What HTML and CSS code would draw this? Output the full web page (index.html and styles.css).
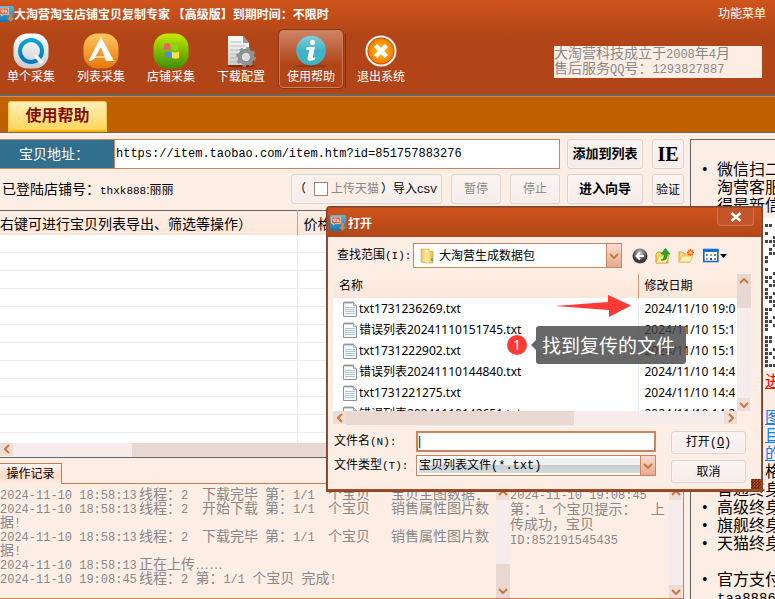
FILE: index.html
```html
<!DOCTYPE html>
<html lang="zh-CN">
<head>
<meta charset="utf-8">
<title>大淘营淘宝店铺宝贝复制专家</title>
<link rel="stylesheet" href="styles.css">
</head>
<body>
<svg class="defs" aria-hidden="true">
  <defs>
    <linearGradient id="silver" x2="0" y2="1"><stop stop-color="#fff"/><stop offset="1" stop-color="#c9cacc"/></linearGradient>
    <linearGradient id="blue" x2="0" y2="1"><stop stop-color="#00a5d8"/><stop offset="1" stop-color="#0a78ba"/></linearGradient>
    <linearGradient id="orange" x2="0" y2="1"><stop stop-color="#ffc65e"/><stop offset="1" stop-color="#e6770c"/></linearGradient>
    <linearGradient id="green" x2="0" y2="1"><stop stop-color="#c4ea00"/><stop offset="1" stop-color="#3e8e04"/></linearGradient>
    <linearGradient id="teal" x2="0" y2="1"><stop stop-color="#7fd0dc"/><stop offset=".5" stop-color="#41b3c6"/><stop offset="1" stop-color="#3fb4c6"/></linearGradient>
    <radialGradient id="flame"><stop stop-color="#ffd000"/><stop offset="1" stop-color="#f47a00"/></radialGradient>
    <linearGradient id="gold" x2="1" y2="0"><stop stop-color="#e8c860"/><stop offset=".5" stop-color="#fff0a8"/><stop offset="1" stop-color="#dcb848"/></linearGradient>
    <linearGradient id="app" x2="0" y2="1"><stop stop-color="#5fb4de"/><stop offset="1" stop-color="#1674ac"/></linearGradient>
    <radialGradient id="ball" cy=".3"><stop stop-color="#ccc"/><stop offset="1" stop-color="#3d3d3d"/></radialGradient>
    <symbol id="up" viewBox="0 0 10 6"><path d="M1 5l4-4 4 4" fill="none" stroke="#c87941" stroke-width="2"/></symbol>
    <symbol id="down" viewBox="0 0 10 6"><path d="M1 1l4 4 4-4" fill="none" stroke="#c87941" stroke-width="2"/></symbol>
    <symbol id="left" viewBox="0 0 6 10"><path d="M5 1L1 5l4 4" fill="none" stroke="#c87941" stroke-width="2"/></symbol>
    <symbol id="right" viewBox="0 0 6 10"><path d="M1 1l4 4-4 4" fill="none" stroke="#c87941" stroke-width="2"/></symbol>
    <symbol id="logo" viewBox="0 0 16 16"><rect width="16" height="16" rx="2" fill="url(#app)"/><path d="M1.500 2h9v6.500H5.500L3.500 10V8.500h-2z" fill="#e8643c" stroke="#f8d8c8" stroke-width=".7"/><path d="M3 4l1.500 3M5 3.500v3.500M7 4l.5 3M8 4l1 3" stroke="#fff" stroke-width=".9"/><path d="M11 8h3v4h2l-3.500 4L9 12h2z" fill="#f47c10"/></symbol>
    <symbol id="txt" viewBox="0 0 14 16"><path d="M.5 1.500h10l3 3v11H.5z" fill="#f7fbfd" stroke="#8b9296"/><path d="M2 6.500h10M2 8.500h10M2 10.500h10M2 12.500h10" stroke="#a9c7d8"/><path d="M2 0v3M4 0v3M6 0v3M8 0v3M10 0v3" stroke="#999" stroke-width=".8"/><path d="M10.500 1.500v3h3" fill="#ddd" stroke="#8b9296" stroke-width=".7"/></symbol>
  </defs>
</svg>

<div class="app">
  <header class="top">
    <div class="titlebar">
      <svg class="logo16"><use href="#logo"/></svg>
      <h1>大淘营淘宝店铺宝贝复制专家 【高级版】到期时间：不限时</h1>
      <a class="menu" href="#">功能菜单</a>
    </div>
    <div class="toolrow">
      <nav class="tools">
        <button class="tool">
          <svg viewBox="0 0 36 36"><rect x=".5" y=".5" width="35" height="35" rx="14" fill="url(#silver)"/><circle cx="18" cy="18" r="11" fill="none" stroke="url(#blue)" stroke-width="4"/><path d="M22 22l7 8" stroke="#f4f4f4" stroke-width="3.500"/></svg>
          单个采集</button>
        <button class="tool">
          <svg viewBox="0 0 36 36"><rect x=".5" y=".5" width="35" height="35" rx="14" fill="url(#orange)"/><path fill-rule="evenodd" d="M18 4l13 24h-8l-1.500-3.500H13L8 28H5.500zM18 14l-5.500 9.500h9z" fill="#fff"/></svg>
          列表采集</button>
        <button class="tool">
          <svg viewBox="0 0 36 36"><rect x=".5" y=".5" width="35" height="35" rx="14" fill="url(#green)"/><path d="M11 11q3-1.500 6 0v6q-3-1-6 0z" fill="#f0606a"/><path d="M19 11.500q3 1 6-1v6q-3 1.500-6 .5z" fill="#8fd420"/><path d="M12 19q3-1.200 6 0v6q-3-1-6 0z" fill="#4a8fd0"/><path d="M19 19q3.500 1 7-.5v6.500q-3.500 1-7 0z" fill="#ffe04a"/></svg>
          店铺采集</button>
        <button class="tool">
          <svg viewBox="0 0 36 36"><ellipse cx="18" cy="33" rx="14" ry="1.500" fill="#7c2c08"/><path d="M5 3h15l6 7v22H5z" fill="url(#silver)"/><path d="M20 3v7h6z" fill="#999"/><path d="M7 9h11M7 13h15M7 17h15M7 21h9M7 25h8M7 29h8" stroke="#bbb"/><circle cx="23" cy="24" r="6" fill="none" stroke="#8f9295" stroke-width="4.500"/><circle cx="23" cy="24" r="8.500" fill="none" stroke="#8f9295" stroke-width="3" stroke-dasharray="3.340"/><circle cx="23" cy="24" r="3.500" fill="#d8d8d8" stroke="#eee"/></svg>
          下载配置</button>
        <button class="tool active">
          <svg viewBox="0 0 36 36"><ellipse cx="18" cy="33" rx="16" ry="1.500" fill="#8b3a1c"/><circle cx="18" cy="17.500" r="14.800" fill="url(#teal)"/><circle cx="19.500" cy="9.500" r="2.600" fill="#fff"/><path d="M13.500 14h8.500L19.800 24q-.2 1.300 2.500.5l-.5 2.200q-8 2.800-7.300-1.700l1.600-7q.2-1.700-3-1.200z" fill="#fff"/></svg>
          使用帮助</button>
        <button class="tool exit">
          <svg viewBox="0 0 36 36"><circle cx="18" cy="18" r="14.500" fill="#c85000" stroke="#f4f4f4" stroke-width="2"/><circle cx="18" cy="18" r="12.500" fill="url(#flame)"/><path d="M12.500 12.500l11 11M23.500 12.500l-11 11" stroke="#fff" stroke-width="4.500"/></svg>
          退出系统</button>
      </nav>
      <p class="company">大淘营科技成立于<span class="mono">2008</span>年<span class="mono">4</span>月<br>售后服务<span class="mono">QQ</span>号：<span class="mono">1293827887</span></p>
    </div>
  </header>
  <div class="tabs"><button class="tab">使用帮助</button></div>

  <div class="body">
    <main class="work">
      <div class="row">
        <label class="addr-label" for="addr">宝贝地址：</label>
        <input class="addr mono" id="addr" value="https://item.taobao.com/item.htm?id=851757883276">
        <button class="btn strong wide">添加到列表</button>
        <button class="btn ie">IE</button>
      </div>
      <div class="row second">
        <span class="shop">已登陆店铺号：<small><span class="mono">thxk888</span>:丽丽</small></span>
        <div class="btn csv"><span>（</span><label class="tmall"><input type="checkbox">上传天猫</label><button>）导入<span class="mono">CSV</span></button></div>
        <button class="btn pause" disabled>暂停</button>
        <button class="btn pause" disabled>停止</button>
        <button class="btn strong wide">进入向导</button>
        <button class="btn ie check">验证</button>
      </div>
      <table class="items">
        <thead><tr><th>右键可进行宝贝列表导出、筛选等操作）</th><th>价格</th></tr></thead>
        <tbody>
          <tr><td></td><td></td></tr><tr><td></td><td></td></tr><tr><td></td><td></td></tr><tr><td></td><td></td></tr>
          <tr><td></td><td></td></tr><tr><td></td><td></td></tr><tr><td></td><td></td></tr><tr><td></td><td></td></tr>
          <tr><td></td><td></td></tr><tr><td></td><td></td></tr><tr><td></td><td></td></tr><tr><td></td><td></td></tr>
        </tbody>
      </table>
      <div class="hbar main-bar"><span class="cap"><svg class="h"><use href="#left"/></svg></span><span class="track"></span><span class="thumb"></span></div>
      <div class="logtabs"><button>操作记录</button></div>
      <div class="logs">
        <div class="log">
          <p><span class="mono time">2024-11-10 18:58:13</span><span class="cell">线程：<span class="mono">2</span></span><span class="cell">下载完毕</span><span class="cell">第：<span class="mono">1/1</span></span><span class="cell">个宝贝</span><span>宝贝主图数据：</span></p>
          <p><span class="mono time">2024-11-10 18:58:13</span><span class="cell">线程：<span class="mono">2</span></span><span class="cell">开始下载</span><span class="cell">第：<span class="mono">1/1</span></span><span class="cell">个宝贝</span><span>销售属性图片数</span></p>
          <p>据<span class="mono">!</span></p>
          <p><span class="mono time">2024-11-10 18:58:13</span><span class="cell">线程：<span class="mono">2</span></span><span class="cell">下载完毕</span><span class="cell">第：<span class="mono">1/1</span></span><span class="cell">个宝贝</span><span>销售属性图片数</span></p>
          <p>据<span class="mono">!</span></p>
          <p><span class="mono time">2024-11-10 18:58:13</span><span>正在上传……</span></p>
          <p><span class="mono time">2024-11-10 19:08:45</span><span>线程：<span class="mono">2 </span>第：<span class="mono">1/1 </span>个宝贝<span class="mono"> </span>完成<span class="mono">!</span></span></p>
        </div>
        <div class="vbar"><span class="cap"><svg class="v"><use href="#up"/></svg></span><span class="track"></span><span class="thumb"><svg class="v"><use href="#down"/></svg></span></div>
        <div class="log tips">
          <p><span class="mono">2024-11-10 19:08:45</span></p>
          <p>第：<span class="mono">1 </span>个宝贝提示：<span class="mono">  </span>上</p>
          <p>传成功，宝贝</p>
          <p><span class="mono">ID:852191545435</span></p>
        </div>
        <div class="vbar"><span class="cap"><svg class="v"><use href="#up"/></svg></span><span class="track"></span><span class="cap"><svg class="v"><use href="#down"/></svg></span></div>
      </div>
    </main>
    <aside class="side">
      <ul>
        <li>微信扫二<br>淘营客服<br>得最新信</li>
      </ul>
      <div class="qr"><svg viewBox="0 0 12 152"><path fill="#444" d="M0 6h3v3H0zM4 6h3v3H4zM0 14h3v3H0zM8 18h3v3H8zM0 22h3v3H0zM4 22h3v3H4zM8 22h3v3H8zM8 26h3v3H8zM4 30h3v3H4zM4 34h3v3H4zM8 34h3v3H8zM0 38h3v3H0zM0 42h3v3H0zM0 50h3v3H0zM8 54h3v3H8zM0 58h3v3H0zM4 58h3v3H4zM0 62h3v3H0zM8 62h3v3H8zM4 66h3v3H4zM8 66h3v3H8zM0 70h3v3H0zM0 74h3v3H0zM8 74h3v3H8zM0 78h3v3H0zM4 78h3v3H4zM4 82h3v3H4zM8 82h3v3H8zM8 86h3v3H8zM0 90h3v3H0zM4 90h3v3H4zM0 94h3v3H0zM0 98h3v3H0zM8 98h3v3H8zM0 102h3v3H0zM4 102h3v3H4zM0 106h3v3H0zM8 106h3v3H8zM0 110h3v3H0zM0 118h3v3H0zM4 118h3v3H4zM0 122h3v3H0zM4 122h3v3H4zM0 126h3v3H0zM0 130h3v3H0zM8 130h3v3H8zM0 134h3v3H0zM4 134h3v3H4zM0 138h3v3H0zM8 138h3v3H8zM0 142h3v3H0zM0 146h3v3H0zM4 146h3v3H4zM8 146h3v3H8z"/></svg></div>
      <p class="tail"><a class="red" href="#">进</a></p>
      <p class="tail gap-above"><a href="#">图<br>目<br>的</a><br>格</p>
      <ul>
        <li>普通终身</li><li>高级终身</li><li>旗舰终身</li><li>天猫终身</li>
      </ul>
      <ul class="gap-above"><li>官方支付<br><span class="pay">taa8886</span></li></ul>
    </aside>
  </div>

  <section class="dialog" role="dialog" aria-label="打开">
    <div class="dlg-title"><svg class="logo16"><use href="#logo"/></svg><h2>打开</h2><button class="close" aria-label="关闭"><svg viewBox="0 0 12 10"><path d="M1.500 1l9 8M10.500 1l-9 8" stroke="#fff" stroke-width="2.500"/></svg></button></div>
    <div class="lookup">
      <label for="dir">查找范围<span class="mono">(I):</span></label>
      <div class="combo">
        <select id="dir"><option>大淘营生成数据包</option></select>
        <svg class="folder" viewBox="0 0 14 16"><path d="M1 1h8v2h4v12H6l-5-1z" fill="url(#gold)" stroke="#c9a53a" stroke-width=".6"/><path d="M6 15V4l3-2v12z" fill="#f7e490"/><path d="M12 10v3" stroke="#4a9ad0" stroke-width="1.500"/></svg>
        <span class="drop"><svg class="v"><use href="#down"/></svg></span>
      </div>
      <div class="icons">
        <button aria-label="后退"><svg viewBox="0 0 16 16"><circle cx="8" cy="8" r="7.500" fill="url(#ball)"/><path d="M12 8H5M8 4.500L4.500 8 8 11.500" fill="none" stroke="#fff" stroke-width="2"/></svg></button>
        <button aria-label="向上一级"><svg viewBox="0 0 16 16"><path d="M1 15V6l2-2h3l1 2h6v9z" fill="#f2dc6e" stroke="#c8a030"/><path d="M1 15l3-7h10l-3 7z" fill="#fff0a0" stroke="#d4b040" stroke-width=".7"/><path d="M6 12q4-1 3-6H6l4.500-5.500L15 6h-3q1 7-6 6z" fill="#2ea82a" stroke="#187818" stroke-width=".6"/></svg></button>
        <button aria-label="新建文件夹"><svg viewBox="0 0 16 16"><path d="M1 14V4h4l1 2h6v8z" fill="#f5d878" stroke="#d8a838"/><path d="M1 14l3-6h11l-3 6z" fill="#fff0b0" stroke="#dcb050" stroke-width=".7"/><path d="M12.500 1v7M9 4.500h7M10 2l5 5M15 2l-5 5" stroke="#f06020" stroke-width="1.300"/><circle cx="12.500" cy="4.500" r="1.500" fill="#ffd040"/></svg></button>
        <button class="view" aria-label="视图"><svg viewBox="0 0 24 16"><path d="M.8 1.500h14v12H.8z" fill="#fff" stroke="#0f62c4" stroke-width="1.600"/><path d="M0 1h15.500v3H0z" fill="#1670d8"/><path d="M3 6h2v2H3zM11 10h2v2h-2z" fill="#88a"/><path d="M7 6h2v2H7zM3 10h2v2H3z" fill="#e09050"/><path d="M11 6h2v2h-2z" fill="#30a030"/><path d="M7 10h2v2H7z" fill="#2040d0"/><path d="M17 6h7l-3.500 4z" fill="#000"/></svg></button>
      </div>
    </div>
    <div class="files">
      <div class="view-port">
        <table>
          <thead><tr><th>名称</th><th>修改日期</th></tr></thead>
          <tbody>
            <tr><td><svg><use href="#txt"/></svg>txt1731236269.txt</td><td>2024/11/10 19:0</td></tr>
            <tr><td><svg><use href="#txt"/></svg>错误列表20241110151745.txt</td><td>2024/11/10 15:1</td></tr>
            <tr><td><svg><use href="#txt"/></svg>txt1731222902.txt</td><td>2024/11/10 15:1</td></tr>
            <tr><td><svg><use href="#txt"/></svg>错误列表20241110144840.txt</td><td>2024/11/10 14:4</td></tr>
            <tr><td><svg><use href="#txt"/></svg>txt1731221275.txt</td><td>2024/11/10 14:4</td></tr>
            <tr><td><svg><use href="#txt"/></svg>错误列表20241110142651.txt</td><td>2024/11/10 14:2</td></tr>
          </tbody>
        </table>
      </div>
      <div class="vbar file-bar"><span class="thumb"><svg class="v"><use href="#up"/></svg></span><span class="track"></span><span class="cap"><svg class="v"><use href="#down"/></svg></span></div>
      <div class="hbar"><span class="cap"><svg class="h"><use href="#left"/></svg></span><span class="thumb"></span><span class="track"></span><span class="cap"><svg class="h"><use href="#right"/></svg></span></div>
    </div>
    <div class="form">
      <div class="fields">
        <label for="fname">文件名<span class="mono">(N):</span></label>
        <input id="fname" type="text" value="|">
        <label for="ftype">文件类型<span class="mono">(T):</span></label>
        <div class="combo type">
          <select id="ftype"><option>宝贝列表文件(*.txt)</option></select>
          <span class="drop"><svg class="v"><use href="#down"/></svg></span>
        </div>
      </div>
      <div class="actions"><button class="btn">打开<span class="mono">(<u>O</u>)</span></button><button class="btn">取消</button></div>
    </div>
    <span class="grip"></span>
  </section>

  <svg class="arrow" viewBox="0 0 76 22"><path d="M0 11L53 7V0l23 10.500L54 22v-7z" fill="#fd3a35"/></svg>
  <span class="badge">1</span>
  <div class="tooltip">找到复传的文件</div>
</div>
</body>
</html>
```
FILE: styles.css
```css
* { box-sizing: border-box; }

body {
  margin: 0;
  font: 12px/14px "Liberation Sans", "Noto Sans CJK SC", sans-serif;
  color: #000;
}

h1, h2, p, ul { margin: 0; padding: 0; }
button, input, select { font: inherit; color: inherit; }
button { padding: 0; border: 0; background: none; white-space: nowrap; }
svg { display: block; flex: none; }
.defs { position: absolute; width: 0; height: 0; }
.mono { font-family: "Liberation Mono", "Noto Sans CJK SC", monospace; }
.logo16 { width: 16px; height: 16px; }

.app {
  position: relative;
  display: flex;
  flex-direction: column;
  height: 100vh;
  overflow: hidden;
  background: #fdeee5;
}

/* header */
.top {
  flex: none;
  background: linear-gradient(#d0541c, #b14517 36px);
  color: #fff;
  border-bottom: 2px solid #666;
}
.titlebar { display: flex; align-items: center; height: 28px; padding-right: 9px; }
.titlebar .logo16 { margin-left: -2px; }
.titlebar h1 { font: bold 12px/16px "Noto Sans CJK SC", sans-serif; margin-right: auto; white-space: nowrap; }
.menu { color: #fff; text-decoration: none; }
.toolrow { display: flex; padding: 2px 13px 6px 0; }
.tools { display: flex; gap: 6px; margin-left: -1px; margin-right: auto; }
.tool {
  display: flex;
  flex-direction: column;
  align-items: center;
  gap: 1px;
  width: 64px;
  height: 58px;
  padding-top: 2px;
  border: 1px solid transparent;
  border-radius: 4px;
}
.tool svg { width: 36px; height: 36px; }
.tool.active {
  border-color: #c9805e;
  outline: 1px solid #8e3410;
  background: linear-gradient(#cd8265, #b14517 60%);
}
.exit { position: relative; }
.exit::before { content: ""; position: absolute; left: -5px; top: 3px; width: 1px; height: 54px; background: #80300e; }
.company {
  width: 208px;
  height: 32px;
  margin-top: 16px;
  background: #fdeee5;
  color: #888;
  font-size: 14px;
  line-height: 14px;
  white-space: nowrap;
}
.company .mono, .log .mono { font-size: 12px; line-height: 12px; }

.tabs {
  flex: none;
  height: 37px;
  padding: 4px 8px 0;
  background: #c06000;
  border-top: 1px solid #d98a50;
  border-bottom: 1px solid #666;
}
.tab {
  width: 99px;
  height: 31px;
  border: 1px solid #f4c650;
  border-bottom: 2px solid #ffb400;
  border-radius: 3px 3px 0 0;
  background: linear-gradient(#ffeeb8, #ffd65c);
  color: #801010;
  font: bold 16px/20px "Liberation Serif", "Noto Sans CJK SC", serif;
}

/* working area */
.body { display: flex; flex: 1; min-height: 0; }
.work { display: flex; flex-direction: column; flex: 1; min-width: 0; }
.row { display: flex; flex: none; align-items: stretch; height: 30px; margin: 6px 1px 5px 0; }
.row.second { margin: 0 1px 6px 0; }
.addr-label {
  width: 114px;
  padding-left: 19px;
  background: #306f8d;
  border: 1px solid #c98560;
  border-width: 1px 0;
  color: #fff;
  font-size: 14px;
  line-height: 28px;
}
.addr { flex: 1; min-width: 0; padding: 0 1px; border: 1px solid #c98560; background: #fff; }
.btn {
  border: 1px solid #ddd2cd;
  border-radius: 3px;
  background: linear-gradient(#fcf5f2, #f3eceb);
  box-shadow: inset 0 0 0 1px #fbf3ef;
}
.wide { width: 76px; margin-left: 7px; }
.strong { font-weight: bold; font-size: 13px; }
.ie { width: 32px; margin-left: 9px; font: bold 20px/24px "Liberation Serif", serif; }
.ie.check { font: 12px/14px "Noto Sans CJK SC", sans-serif; }
.shop { margin-right: auto; padding-left: 2px; font-size: 14px; line-height: 30px; }
.shop small { font-size: 12px; }
.shop .mono { font-size: 11px; }
.csv { display: flex; align-items: center; width: 151px; overflow: hidden; }
.csv > span { width: 18px; margin-left: 2px; }
.csv .mono { font-size: 11px; }
.tmall { display: flex; align-items: center; gap: 3px; width: 69px; height: 24px; padding-left: 2px; background: #fdeee5; color: #888; white-space: nowrap; }
.tmall input { appearance: none; flex: none; width: 14px; height: 14px; margin: 0; border: 1px solid #888; background: #fff; }
.pause { width: 50px; margin-left: 9px; color: #888; }

.items { flex: none; width: 100%; border-collapse: collapse; table-layout: fixed; border-top: 1px solid #666; background: #fff; }
.items th { height: 24px; padding: 0 7px 0 0; background: linear-gradient(#fdeee5, #fbe6d9); font: 14px/20px "Noto Sans CJK SC", sans-serif; text-align: left; white-space: nowrap; }
.items th:first-child { width: 297px; }
.items th + th { padding-left: 6px; border-left: 1px solid #d99a70; }
.items td { height: 18px; padding: 0; border-bottom: 1px solid #ececec; border-right: 1px solid #ececec; }
.items tbody tr:last-child td { height: 10px; border-bottom: 0; }

.hbar, .vbar { display: flex; background: #f6eceb; }
.hbar { height: 14px; }
.vbar { flex-direction: column; width: 14px; }
.cap { display: flex; align-items: center; justify-content: center; flex: none; width: 13px; height: 13px; background: #eedcd5; }
.track { flex: 1; }
.thumb { display: flex; justify-content: center; background: #e9d7d1; }
svg.v { width: 10px; height: 6px; }
svg.h { width: 6px; height: 10px; }
.main-bar { flex: none; height: 15px; border-bottom: 1px solid #666; }
.main-bar .track { flex: 0 0 119px; }
.main-bar .thumb { flex: 1; }

.logtabs { flex: none; display: flex; height: 26px; padding-top: 5px; border-bottom: 1px solid #d07848; }
.logtabs button {
  width: 62px;
  height: 21px;
  border: 1px solid #d07848;
  border-width: 1px 1px 0 0;
  background: linear-gradient(#fff4ef, #fbd9c9 60%, #fdeee5);
}
.logs { display: flex; flex: 1; min-height: 0; margin-right: 1px; padding-top: 3px; border: 1px solid #d07848; border-width: 0 1px 1px 0; }
.log { flex: 1; min-width: 0; overflow: hidden; color: #888; font-size: 14px; line-height: 14px; }
.log p { height: 14px; white-space: pre; }
.log .time, .cell { display: inline-block; }
.log .time { width: 139px; }
.cell { width: 63px; }
.logs .vbar .thumb { height: 34px; align-items: flex-end; padding-bottom: 4px; }
.tips { flex: 0 0 159px; }
.log.tips p { height: 15px; }

/* side panel */
.side {
  flex: 0 0 85px;
  margin: 6px 0 0 5px;
  padding-top: 21px;
  border: 1px solid #666;
  border-width: 1px 0 0 1px;
  font: 16px/18px "Liberation Serif", "Noto Sans CJK SC", sans-serif;
  white-space: nowrap;
  overflow: hidden;
}
.side ul { padding-left: 26px; list-style: none; }
.side li::before { content: "•"; float: left; margin-left: -15px; }
.qr { height: 152px; margin: 3px 0 3px 26px; padding-left: 48px; background: #fff; }
.qr svg { width: 12px; height: 152px; }
.tail { padding-left: 74px; }
.side a { color: #0a84ff; }
.side a.red { color: #f00; }
.gap-above { margin-top: 18px; }
.pay { font-family: "Liberation Mono", monospace; font-size: 14px; }

/* open-file window */
.dialog {
  position: absolute;
  left: 326px;
  top: 206px;
  width: 437px;
  border: 2px solid #a84a20;
  border-bottom-width: 3px;
  outline: 1px solid rgba(90, 70, 60, .6);
  outline-offset: -1px;
  border-radius: 4px 4px 0 0;
  background: #fdeee5;
}
.dlg-title { display: flex; align-items: center; gap: 2px; height: 29px; padding-left: 2px; background: linear-gradient(#d0541c, #b14517); color: #fff; }
.dlg-title h2 { margin-right: auto; font: bold 12px/16px "Noto Sans CJK SC", sans-serif; }
.close { align-self: flex-start; display: grid; place-items: center; width: 37px; height: 18px; margin-right: 7px; border: 1px solid #cc7850; border-top: 0; border-radius: 0 0 4px 4px; background: #c2562a; }
.close svg { width: 12px; height: 10px; }
.lookup { display: flex; align-items: center; padding: 6px 0 6px 9px; }
.lookup label { width: 76px; white-space: nowrap; }
.dialog label .mono { font-size: 11px; }
.combo { display: grid; grid-template-columns: 1fr 15px; width: 209px; height: 25px; border: 1px solid #c98560; background: #fff; }
.combo select { grid-area: 1 / 1 / 2 / 3; appearance: none; width: 100%; padding: 0 0 0 25px; border: 0; background: none; }
.folder { grid-area: 1 / 1; align-self: center; width: 14px; height: 16px; margin-left: 6px; pointer-events: none; }
.drop { grid-area: 1 / 2; display: grid; place-items: center; border-left: 1px solid #c98560; background: linear-gradient(#f8dccf, #e6a98f); pointer-events: none; }
.icons { display: flex; gap: 7px; margin-left: 10px; }
.icons svg { width: 16px; height: 16px; }
.icons .view { margin-left: 2px; }
.icons .view svg { width: 24px; }

.files { display: grid; grid-template-columns: 1fr 14px; grid-template-rows: 137px 14px; margin: 0 10px 0 5px; }
.view-port { overflow: hidden; background: #fff; }
.files table { width: 100%; border-collapse: collapse; table-layout: fixed; font: 12px/20px "Noto Sans", "Noto Sans CJK SC", sans-serif; }
.files th { height: 24px; padding: 0 6px; background: linear-gradient(#fdeee5, #fbe6d9); font-weight: normal; text-align: left; }
.files th:first-child { width: 305px; }
.files th + th { border-left: 1px solid #d99a70; }
.files td { height: 21px; padding: 0 0 0 6px; white-space: nowrap; }
.files td + td { border-left: 1px solid #e4eefb; }
.files td svg { display: inline-block; width: 14px; height: 16px; margin: 0 2px 0 4px; vertical-align: -4px; }
.file-bar .thumb { height: 34px; padding-top: 4px; }
.files .hbar .thumb { width: 228px; }

.form { display: flex; justify-content: space-between; padding: 6px 15px 6px 6px; }
.fields { display: grid; grid-template-columns: 82px 240px; grid-template-rows: 21px 21px; row-gap: 3px; align-items: center; }
.fields label { white-space: nowrap; }
#fname { width: 100%; height: 21px; padding: 0 0 2px; border: 2px solid #c98560; background: #fff; }
.combo.type { width: 240px; height: 21px; }
.combo.type select { padding-left: 0; border: 2px solid #fff; background: linear-gradient(#eef2f3 50%, #c9d0d2 50%, #d4dadc); font-family: "Liberation Mono", "Noto Sans CJK SC", monospace; }
.actions { display: grid; grid-template-rows: 23px 23px; row-gap: 6px; width: 75px; }
.grip { position: absolute; right: 0; bottom: 0; width: 10px; height: 10px; background: repeating-conic-gradient(#6a2c10 0 25%, #b14517 0 50%) 0 0 / 3px 3px; }

/* annotations */
.arrow { position: absolute; left: 555px; top: 295px; width: 76px; height: 22px; }
.badge {
  position: absolute;
  left: 507px;
  top: 335px;
  width: 20px;
  height: 20px;
  border-radius: 50%;
  background: #fd3a35;
  color: #fff;
  font: 14px/20px "Noto Sans", sans-serif;
  text-align: center;
}
.tooltip {
  position: absolute;
  left: 536px;
  top: 326px;
  padding: 6px 11px 6px 6px;
  border-radius: 3px;
  background: rgba(70, 70, 70, .82);
  color: #fff;
  font: 19px/26px "Noto Sans CJK SC", sans-serif;
}
.tooltip::before { content: ""; position: absolute; left: -5px; top: 14px; border: solid transparent; border-width: 5px 5px 5px 0; border-right-color: rgba(70, 70, 70, .82); }
```
